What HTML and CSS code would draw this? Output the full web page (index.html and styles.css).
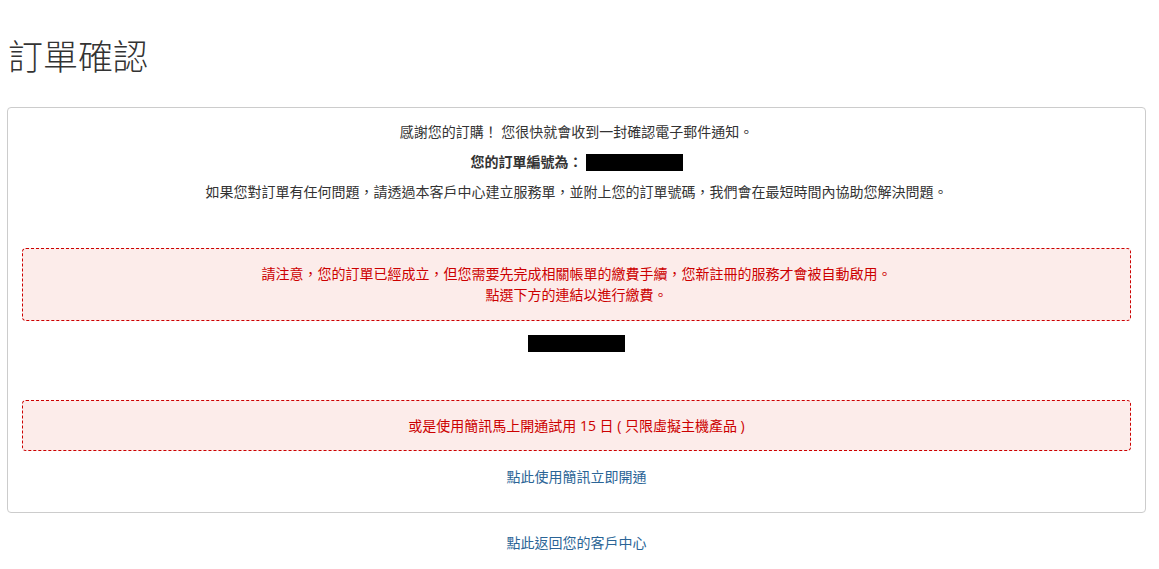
FILE: index.html
```html
<!DOCTYPE html>
<html lang="zh-Hant">
<head>
  <meta charset="UTF-8" />
  <meta name="viewport" content="width=device-width, initial-scale=1" />
  <title>訂單確認</title>
  <link rel="stylesheet" href="styles.css">
</head>
<body>
  <div class="page">
    <h1>訂單確認</h1>

    <div class="panel">
      <p>感謝您的訂購！ 您很快就會收到一封確認電子郵件通知。</p>
      <p class="order-no"><strong>您的訂單編號為：</strong><span class="redacted"></span></p>
      <p>如果您對訂單有任何問題，請透過本客戶中心建立服務單，並附上您的訂單號碼，我們會在最短時間內協助您解決問題。</p>

      <div class="notice notice-pay">
        請注意，您的訂單已經成立，但您需要先完成相關帳單的繳費手續，您新註冊的服務才會被自動啟用。<br />
        點選下方的連結以進行繳費。
      </div>

      <div class="pay-link"><span class="redacted"></span></div>

      <div class="notice notice-sms">
        或是使用簡訊馬上開通試用 15 日 ( 只限虛擬主機產品 )
      </div>

      <p class="sms-link"><a href="#">點此使用簡訊立即開通</a></p>
    </div>

    <p class="back-link"><a href="#">點此返回您的客戶中心</a></p>
  </div>
</body>
</html>
```

FILE: styles.css
```css
/* Reset */
* {
  box-sizing: border-box;
}
html, body {
  margin: 0;
  padding: 0;
  background: #fff;
  color: #333;
  font-family: 'Open Sans', 'Noto Sans CJK TC', sans-serif;
  font-size: 14px;
  line-height: 20px;
}

.page {
  width: 1139px;
  margin-left: 7px;
}

h1 {
  font-family: 'Noto Sans CJK TC', sans-serif;
  font-weight: 300;
  font-size: 35px;
  line-height: 40px;
  margin: 35px 0 32px 1px;
  color: #333;
}

.panel {
  border: 1px solid #ccc;
  border-radius: 4px;
  padding: 14px 14px 25px;
  text-align: center;
}

.panel p {
  margin: 0 0 10px;
}

.order-no {
  display: flex;
  justify-content: center;
  align-items: center;
}

.order-no .redacted {
  margin-left: 3px;
}

.redacted {
  display: inline-block;
  width: 97px;
  height: 17px;
  background: #000;
}

.notice {
  background: #fcecea;
  border: 1px dashed #cc0000;
  border-radius: 4px;
  color: #cc0000;
  font-weight: 400;
  line-height: 21px;
}

.notice-pay {
  margin-top: 46px;
  padding: 14px 15px 15px;
}

.pay-link {
  height: 17px;
  margin: 14px 0 48px;
  line-height: 0;
}

.notice-sms {
  padding: 14px 15px 14px;
}

.sms-link {
  margin: 16px 0 0 !important;
}

a {
  color: #2a6496;
  text-decoration: none;
}

.back-link {
  text-align: center;
  margin: 20px 0 0;
}
```
